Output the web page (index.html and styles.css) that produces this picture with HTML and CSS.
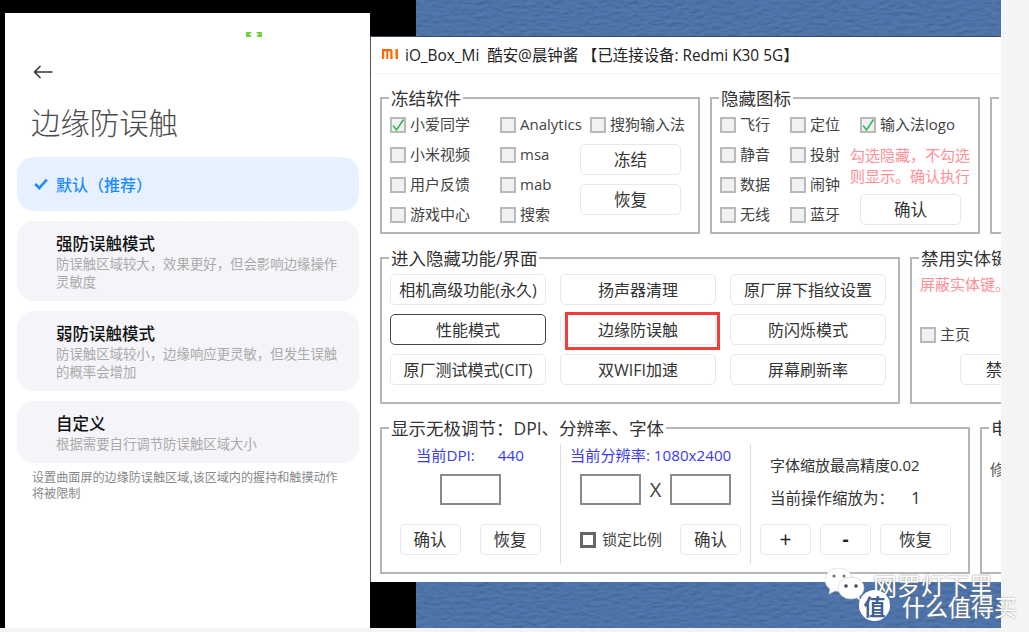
FILE: index.html
```html
<!DOCTYPE html>
<html lang="zh-CN">
<head>
  <meta charset="UTF-8" />
  <title>边缘防误触 - iO_Box_Mi</title>
  <link rel="stylesheet" href="styles.css">
</head>
<body>
  <svg class="defs" width="0" height="0" aria-hidden="true">
    <filter id="leather" x="0" y="0" width="100%" height="100%">
      <feTurbulence type="fractalNoise" baseFrequency="0.12 0.28" numOctaves="4" seed="7" />
      <feDiffuseLighting surfaceScale="0.9" diffuseConstant="1.1" lighting-color="#5075aa">
        <feDistantLight azimuth="80" elevation="62" />
      </feDiffuseLighting>
    </filter>
  </svg>

  <div class="shot">
    <!-- phone settings screen -->
    <div class="phone-col">
      <section class="phone">
        <svg class="marker" width="16" height="5" viewBox="0 0 16 5"><path d="M0 0h6L3 3h2v2H0zM16 0h-6l3 3h-2v2h5z" fill="#6fd33f"/></svg>
        <svg class="back" width="20" height="14" viewBox="0 0 20 14"><path d="M19.5 7H1.5M7.5 1 1.5 7l6 6" fill="none" stroke="#333" stroke-width="1.5"/></svg>
        <h1 class="phone-title">边缘防误触</h1>
        <div class="card-list">
          <div class="card card-on">
            <svg class="tick" width="14" height="12" viewBox="0 0 14 12"><path d="M1.2 6 5.2 10 12.8 1.6" fill="none" stroke="#1a8cff" stroke-width="2.6"/></svg>
            <span>默认（推荐）</span>
          </div>
          <div class="card">
            <h3>强防误触模式</h3>
            <p>防误触区域较大，效果更好，但会影响边缘操作<br>灵敏度</p>
          </div>
          <div class="card">
            <h3>弱防误触模式</h3>
            <p>防误触区域较小，边缘响应更灵敏，但发生误触<br>的概率会增加</p>
          </div>
          <div class="card">
            <h3>自定义</h3>
            <p>根据需要自行调节防误触区域大小</p>
          </div>
        </div>
        <p class="phone-note">设置曲面屏的边缘防误触区域,该区域内的握持和触摸动作<br>将被限制</p>
      </section>
    </div>

    <!-- desktop tool window -->
    <div class="desk">
      <div class="strip strip-top">
        <div class="strip-black"></div>
        <svg class="strip-tex"><rect width="100%" height="100%" filter="url(#leather)"/></svg>
      </div>

      <div class="window">
        <div class="titlebar">
          <svg class="mi-logo" width="16" height="10" viewBox="0 0 16 10"><path d="M0 0h8.5Q10.500 0 10.500 2v8H8.300V2.200H6.300V10H4.300V2.200H2.200V10H0zM13.500 0H16v10h-2.500z" fill="#ff6a00"/></svg>
          <span>iO_Box_Mi&nbsp; 酷安@晨钟酱 【已连接设备: Redmi K30 5G】</span>
        </div>

        <div class="row">
          <fieldset class="group group-freeze">
            <legend>冻结软件</legend>
            <div class="freeze-grid">
              <div class="check-col">
                <label class="check"><span class="box"><svg width="14" height="14" viewBox="0 0 14 14"><path d="M2 7.500 5.500 12 12.500 1.500" fill="none" stroke="#2fb457" stroke-width="1.500"/></svg></span>小爱同学</label>
                <label class="check"><span class="box"></span>小米视频</label>
                <label class="check"><span class="box"></span>用户反馈</label>
                <label class="check"><span class="box"></span>游戏中心</label>
              </div>
              <div class="check-col">
                <label class="check"><span class="box"></span>Analytics</label>
                <label class="check"><span class="box"></span>msa</label>
                <label class="check"><span class="box"></span>mab</label>
                <label class="check"><span class="box"></span>搜索</label>
              </div>
              <div class="action-col">
                <label class="check check-inset"><span class="box"></span>搜狗输入法</label>
                <button class="btn btn-wide first-btn">冻结</button>
                <button class="btn btn-wide">恢复</button>
              </div>
            </div>
          </fieldset>

          <fieldset class="group group-icons">
            <legend>隐藏图标</legend>
            <div class="icons-grid">
              <div class="check-col">
                <label class="check"><span class="box"></span>飞行</label>
                <label class="check"><span class="box"></span>静音</label>
                <label class="check"><span class="box"></span>数据</label>
                <label class="check"><span class="box"></span>无线</label>
              </div>
              <div class="check-col">
                <label class="check"><span class="box"></span>定位</label>
                <label class="check"><span class="box"></span>投射</label>
                <label class="check"><span class="box"></span>闹钟</label>
                <label class="check"><span class="box"></span>蓝牙</label>
              </div>
              <div class="action-col">
                <label class="check check-inset"><span class="box"><svg width="14" height="14" viewBox="0 0 14 14"><path d="M2 7.500 5.500 12 12.500 1.500" fill="none" stroke="#2fb457" stroke-width="1.500"/></svg></span>输入法logo</label>
                <p class="warn warn-block">勾选隐藏，不勾选<br>则显示。确认执行</p>
                <button class="btn btn-wide btn-inset">确认</button>
              </div>
            </div>
          </fieldset>

          <fieldset class="group group-stub">
            <legend>&nbsp;</legend>
          </fieldset>
        </div>

        <div class="row row-tall">
          <fieldset class="group group-hidden">
            <legend>进入隐藏功能/界面</legend>
            <div class="hidden-grid">
              <button class="btn">相机高级功能(永久)</button>
              <button class="btn">扬声器清理</button>
              <button class="btn">原厂屏下指纹设置</button>
              <button class="btn btn-focus">性能模式</button>
              <button class="btn">边缘防误触</button>
              <button class="btn">防闪烁模式</button>
              <button class="btn">原厂测试模式(CIT)</button>
              <button class="btn">双WIFI加速</button>
              <button class="btn">屏幕刷新率</button>
            </div>
            <div class="red-box"></div>
          </fieldset>

          <fieldset class="group group-keys">
            <legend>禁用实体键</legend>
            <p class="warn keys-warn">屏蔽实体键。</p>
            <label class="check keys-check"><span class="box"></span>主页</label>
            <button class="btn btn-wide keys-btn">禁用键</button>
          </fieldset>
        </div>

        <div class="row row-tall">
          <fieldset class="group group-display">
            <legend>显示无极调节：DPI、分辨率、字体</legend>
            <div class="display-cols">
              <div class="col-dpi">
                <p class="blue">当前DPI:<span class="dpi-val">440</span></p>
                <div class="field"></div>
                <div class="btn-row btn-row-dpi">
                  <button class="btn btn-small">确认</button>
                  <button class="btn btn-small">恢复</button>
                </div>
              </div>
              <div class="col-res">
                <p class="blue">当前分辨率: 1080x2400</p>
                <div class="res-inputs">
                  <div class="field"></div>
                  <span class="res-x">X</span>
                  <div class="field"></div>
                </div>
                <div class="res-actions">
                  <label class="check check-lock"><span class="box box-dark"></span>锁定比例</label>
                  <button class="btn btn-small">确认</button>
                </div>
              </div>
              <div class="col-font">
                <p class="font-line font-line-one">字体缩放最高精度0.02</p>
                <p class="font-line font-line-two">当前操作缩放为：<span class="scale-val">1</span></p>
                <div class="btn-row">
                  <button class="btn btn-step"><span class="sign-plus">+</span></button>
                  <button class="btn btn-step"><b class="sign-minus">-</b></button>
                  <button class="btn btn-reset">恢复</button>
                </div>
              </div>
            </div>
          </fieldset>

          <fieldset class="group group-power">
            <legend>电量</legend>
            <p class="power-line">修改</p>
          </fieldset>
        </div>
      </div>

      <div class="strip strip-bottom">
        <div class="strip-black"></div>
        <svg class="strip-tex"><rect width="100%" height="100%" filter="url(#leather)"/></svg>
      </div>
    </div>
  </div>

  <!-- watermark over the lower right corner -->
  <div class="watermark">
    <svg class="wechat" width="40" height="34" viewBox="0 0 40 34">
      <path d="M14 0C6 0 0 5 0 12c0 4 2 7 5 9l-1 5 6-3c1 .3 3 .5 4 .5C22 23.500 28 18 28 12S22 0 14 0z" fill="#fff" stroke="#ccc" stroke-width=".6"/>
      <ellipse cx="26" cy="20" rx="13" ry="11" fill="#fff" stroke="#ccc" stroke-width=".6"/>
      <path d="M31 29l4 4-1-6z" fill="#fff"/>
      <circle cx="9" cy="8" r="1.600" fill="#777"/><circle cx="19" cy="8" r="1.600" fill="#777"/>
      <circle cx="21" cy="18" r="1.800" fill="#445"/><circle cx="31" cy="18" r="1.800" fill="#445"/>
    </svg>
    <span class="wm-name">网罗灯下里</span>
    <span class="wm-badge">值</span>
    <span class="wm-site">什么值得买</span>
  </div>
</body>
</html>
```

FILE: styles.css
```css
/* Reset & base */
*, *::before, *::after {
  box-sizing: border-box;
}
html, body {
  margin: 0;
  padding: 0;
}
body {
  position: relative;
  width: 1029px;
  height: 632px;
  overflow: hidden;
  background: #f4f4f4;
  font-family: "Open Sans", "Noto Sans CJK SC", sans-serif;
  color: #333;
}
p, h1, h3 {
  margin: 0;
  font-weight: normal;
}
.defs {
  position: absolute;
}
.shot {
  display: flex;
  height: 628px;
  width: 1001px;
}

/* Phone screen */
.phone-col {
  flex: none;
  width: 370px;
  background: #000;
  padding: 13px 0 0 5px;
}
.phone {
  position: relative;
  height: 615px;
  background: #fff;
  font-family: "Noto Sans CJK SC", sans-serif;
  overflow: hidden;
}
.marker {
  position: absolute;
  left: 241px;
  top: 19px;
}
.back {
  display: block;
  margin: 52px 0 0 28px;
}
.phone-title {
  margin: 20px 0 0 26px;
  font-size: 29.4px;
  line-height: 44px;
  font-weight: 300;
  color: #4a4a4a;
}
.card-list {
  display: flex;
  flex-direction: column;
  gap: 10px;
  margin: 14px 11px 0 12px;
}
.card {
  background: #f5f4f8;
  border-radius: 17px;
  padding: 11px 20px 11px 39px;
}
.card h3 {
  font-size: 16.5px;
  line-height: 22px;
  font-weight: 500;
  color: #111;
}
.card p {
  font-size: 13.4px;
  line-height: 18px;
  color: #aaa;
  white-space: nowrap;
}
.card-on {
  position: relative;
  display: flex;
  align-items: center;
  height: 54px;
  padding: 0 0 0 39px;
  background: #e6f0fe;
  color: #1a8cff;
  font-size: 16px;
  font-weight: 500;
}
.tick {
  position: absolute;
  left: 17px;
  top: 21px;
}
.phone-note {
  margin: 6px 0 0 27px;
  font-size: 12.1px;
  line-height: 16px;
  color: #888;
  white-space: nowrap;
}

/* Desktop side */
.desk {
  flex: none;
  width: 631px;
  display: flex;
  flex-direction: column;
}
.strip {
  display: flex;
  flex: none;
}
.strip-top {
  height: 36px;
}
.strip-bottom {
  height: 46px;
}
.strip-black {
  flex: none;
  width: 46px;
  background: #000;
}
.strip-tex {
  flex: 1;
  height: 100%;
  min-width: 0;
  display: block;
}
.window {
  flex: none;
  height: 546px;
  background: #fff;
  border-left: 1px solid #555;
  border-top: 1px solid #3c4a5e;
  overflow: hidden;
}
.titlebar {
  display: flex;
  align-items: center;
  gap: 7px;
  height: 37px;
  padding: 0 0 2px 11px;
  border-bottom: 1px solid #f6f6f6;
  font-size: 15.4px;
  color: #222;
  white-space: nowrap;
}
.mi-logo {
  flex: none;
}
.row {
  display: flex;
  gap: 10px;
  height: 146px;
  margin: 14px 0 0 9px;
  width: 800px;
}
.row-tall {
  height: 156px;
}

/* Group boxes */
.group {
  position: relative;
  flex: none;
  margin: 0;
  padding: 9px 0 0 8px;
  border: 2px solid #b6b6b6;
  min-inline-size: 0;
}
.group legend {
  margin-left: -1px;
  padding: 0 2px;
  font-size: 17.5px;
  line-height: 20px;
  color: #333;
  white-space: nowrap;
}
.group-display legend {
  margin-left: 7px;
}
.group-freeze { width: 320px; }
.group-icons { width: 270px; }
.group-stub { width: 60px; }
.group-hidden { width: 520px; padding-top: 6px; }
.group-keys { width: 100px; padding-top: 0; }
.group-display { width: 590px; padding: 6px 0 0 0; }
.group-power { width: 60px; padding-top: 0; }

/* Checkboxes */
.check {
  display: flex;
  align-items: flex-start;
  gap: 4px;
  height: 16px;
  font-size: 15px;
  line-height: 14px;
  white-space: nowrap;
  color: #444;
}
.box {
  flex: none;
  display: flex;
  align-items: center;
  justify-content: center;
  width: 16px;
  height: 16px;
  background: #f0f1f3;
  border: 2px solid #b9b9b9;
}
.box svg {
  flex: none;
}
.box-dark {
  background: #fff;
  border: 3px solid #666;
}
.check-col {
  display: flex;
  flex-direction: column;
  gap: 14px;
}
.action-col {
  display: flex;
  flex-direction: column;
}
.check-inset {
  margin-left: 10px;
}
.freeze-grid {
  display: grid;
  grid-template-columns: 110px 80px 110px;
}
.icons-grid {
  display: grid;
  grid-template-columns: 70px 60px 130px;
}
.warn {
  color: #ff8f96;
  font-size: 15px;
  line-height: 21px;
  white-space: nowrap;
}
.warn-block {
  margin-top: 12px;
}

/* Buttons */
.btn {
  display: block;
  height: 31px;
  padding: 0;
  background: #fff;
  border: 1px solid #e8e8e8;
  border-radius: 5px;
  font-family: inherit;
  font-size: 16px;
  line-height: 28px;
  color: #333;
  white-space: nowrap;
}
.btn-wide {
  width: 101px;
  margin-top: 9px;
  font-size: 16.5px;
}
.first-btn {
  margin-top: 11px;
}
.btn-inset {
  margin: 7px 0 0 10px;
}
.btn-focus {
  border: 1.5px solid #444;
}
.btn-small {
  width: 61px;
  font-size: 16.5px;
}
.btn-step {
  width: 51px;
}
.sign-plus {
  font-size: 21px;
  color: #222;
}
.sign-minus {
  font-size: 19px;
  color: #222;
}
.btn-reset {
  width: 71px;
  font-size: 16.5px;
}
.hidden-grid {
  display: grid;
  grid-template-columns: repeat(3, 156px);
  grid-auto-rows: 31px;
  gap: 9px 14px;
}
.red-box {
  position: absolute;
  left: 183px;
  top: 44px;
  width: 155px;
  height: 38px;
  border: 3px solid #f63b3b;
}

/* Keys group */
.keys-warn {
  margin-top: 6px;
}
.keys-check {
  margin-top: 32px;
}
.keys-btn {
  margin: 11px 0 0 40px;
}
.power-line {
  margin-top: 21px;
  font-size: 15px;
  line-height: 20px;
  color: #555;
}

/* Display group */
.display-cols {
  display: flex;
  height: 120px;
}
.col-dpi {
  flex: none;
  width: 178px;
  padding-right: 2px;
  display: flex;
  flex-direction: column;
  align-items: center;
}
.col-res {
  flex: none;
  width: 190px;
  border-left: 1px solid #ddd;
  padding-left: 9px;
}
.col-font {
  flex: none;
  border-left: 1px solid #ddd;
  padding-left: 9px;
}
.blue {
  color: #3a3af0;
  font-size: 15.2px;
  line-height: 22px;
  white-space: nowrap;
}
.dpi-val {
  margin-left: 23px;
}
.field {
  flex: none;
  width: 61px;
  height: 31px;
  border: 2px solid #8a8a8a;
  background: #fff;
}
.col-dpi .field {
  margin-top: 8px;
}
.btn-row {
  display: flex;
  gap: 9px;
}
.btn-row-dpi {
  gap: 19px;
  margin-top: 19px;
}
.res-inputs {
  display: flex;
  align-items: center;
  margin: 8px 0 0 10px;
}
.res-x {
  width: 29px;
  text-align: center;
  font-size: 20px;
  color: #444;
}
.res-actions {
  display: flex;
  align-items: center;
  justify-content: space-between;
  width: 161px;
  margin: 19px 0 0 10px;
}
.check-lock {
  gap: 6px;
}
.font-line {
  margin-left: 10px;
  font-size: 15px;
  line-height: 22px;
  white-space: nowrap;
}
.font-line-one {
  margin-top: 10px;
}
.font-line-two {
  margin-top: 11px;
  margin-bottom: 15px;
  font-size: 15.5px;
}
.scale-val {
  margin-left: 17px;
  font-size: 17px;
}

/* Watermark */
.watermark {
  position: absolute;
  left: 0;
  top: 0;
  pointer-events: none;
  font-family: "Noto Sans CJK SC", sans-serif;
}
.wechat {
  position: absolute;
  left: 825px;
  top: 568px;
}
.wm-name {
  position: absolute;
  left: 873px;
  top: 575px;
  font-size: 24px;
  line-height: 20px;
  color: #fff;
  white-space: nowrap;
  text-shadow: 0 0 2px #777;
}
.wm-badge {
  position: absolute;
  left: 859px;
  top: 590px;
  width: 31px;
  height: 31px;
  border-radius: 50%;
  background: #fff;
  color: #3f6093;
  font-size: 22px;
  line-height: 30px;
  font-weight: 700;
  text-align: center;
}
.wm-site {
  position: absolute;
  left: 902px;
  top: 596px;
  font-size: 23px;
  line-height: 20px;
  color: #fff;
  white-space: nowrap;
  text-shadow: 0 0 2px #888;
}
```
